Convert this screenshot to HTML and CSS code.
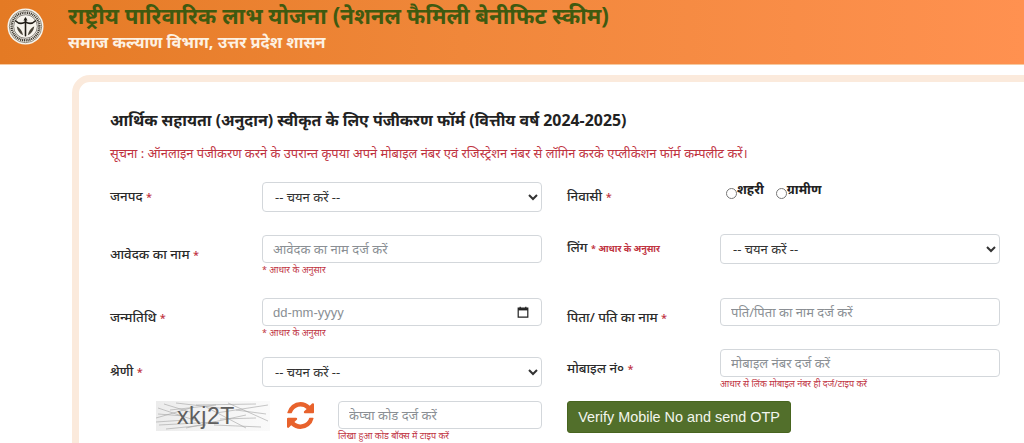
FILE: index.html
```html
<!DOCTYPE html>
<html lang="hi">
<head>
<meta charset="utf-8">
<title>राष्ट्रीय पारिवारिक लाभ योजना</title>
<link rel="stylesheet" href="styles.css">
</head>
<body>
<header class="site-header">
  <svg class="logo" viewBox="0 0 40 40" aria-hidden="true">
    <circle cx="20" cy="20" r="19.500" fill="#f7f4ec"/>
    <circle cx="20" cy="20" r="17.500" fill="none" stroke="#6b6455" stroke-width="0.8"/>
    <circle cx="20" cy="20" r="15" fill="none" stroke="#3a352b" stroke-width="2.600" stroke-dasharray="1.2 0.8"/>
    <circle cx="20" cy="20" r="12.800" fill="#f7f4ec" stroke="#2f2a22" stroke-width="0.6"/>
    <path d="M9.500 14C13 17.500 17 17 20 15C23 17 27 17.500 30.500 14M20 11V30" fill="none" stroke="#1f1b14" stroke-width="1.700" stroke-linecap="round"/>
    <path d="M17.800 13.500 20 10l2.200 3.500z" fill="#1f1b14"/>
    <path d="M10.500 20c1 5 3.500 8 7 9.500-1-4-3-8-7-9.500zM29.500 20c-1 5-3.500 8-7 9.500 1-4 3-8 7-9.500z" fill="#4b463a"/>
  </svg>
  <div class="brand">
    <h1 class="brand-title">राष्ट्रीय पारिवारिक लाभ योजना (नेशनल फैमिली बेनीफिट स्कीम)</h1>
    <p class="brand-sub">समाज कल्याण विभाग, उत्तर प्रदेश शासन</p>
  </div>
</header>

<main class="card">
  <h2 class="form-title">आर्थिक सहायता (अनुदान) स्वीकृत के लिए पंजीकरण फॉर्म (वित्तीय वर्ष 2024-2025)</h2>
  <p class="notice">सूचना : ऑनलाइन पंजीकरण करने के उपरान्त कृपया अपने मोबाइल नंबर एवं रजिस्ट्रेशन नंबर से लॉगिन करके एप्लीकेशन फॉर्म कम्पलीट करें।</p>

  <form class="form-columns">
    <div class="column">
      <div class="row row-district">
        <label class="label label-low">जनपद <span class="req">*</span></label>
        <select class="control select"><option>-- चयन करें --</option></select>
      </div>
      <div class="row row-name">
        <label class="label label-low2">आवेदक का नाम <span class="req">*</span></label>
        <div>
          <input class="control input" placeholder="आवेदक का नाम दर्ज करें">
          <small class="hint">* आधार के अनुसार</small>
        </div>
      </div>
      <div class="row row-dob">
        <label class="label label-low2">जन्मतिथि <span class="req">*</span></label>
        <div>
          <div class="date-wrap">
            <input class="control input date" placeholder="dd-mm-yyyy">
            <svg class="date-icon" viewBox="0 0 12 12" aria-hidden="true"><path d="M1.200 2.200h9.600v8.900H1.200z" fill="none" stroke="#222" stroke-width="1.200"/><path d="M3.200.8v1.800M8.800.8v1.800" stroke="#222" stroke-width="1.200"/><rect x="1.200" y="2.200" width="9.600" height="2.200" fill="#222"/></svg>
          </div>
          <small class="hint">* आधार के अनुसार</small>
        </div>
      </div>
      <div class="row row-cat">
        <label class="label">श्रेणी <span class="req">*</span></label>
        <select class="control select"><option>-- चयन करें --</option></select>
      </div>
      <div class="captcha-row">
        <svg class="captcha" viewBox="0 0 114 30" role="img" aria-label="captcha">
          <defs><linearGradient id="capfade" x1="0" x2="1" y1="0" y2="0"><stop offset="0" stop-color="#ececec"/><stop offset="0.5" stop-color="#f4f4f4"/><stop offset="1" stop-color="#fafafa"/></linearGradient></defs>
          <rect width="114" height="30" fill="url(#capfade)"/>
          <g stroke="#a2a2a2" stroke-width="0.6" fill="none">
            <path d="M2 7 44 21M8 3 34 11M0 17 38 6M3 24 60 21M40 4 100 3M60 12 112 4M72 2 112 20M58 24 105 26M30 27 90 14M50 6 90 27M2 13 28 15M80 9 110 13M20 2 72 8M10 28 50 24M0 21 30 19M64 18 100 17M14 9 60 4"/>
          </g>
          <text class="captcha-text" x="21" y="23">xkj2T</text>
        </svg>
        <svg class="refresh" viewBox="0 0 1536 1536" aria-hidden="true">
          <path fill="#e8622c" d="M1511 928q0 5-1 7-64 268-268 434.500t-478 166.500q-146 0-282.500-55t-243.500-157l-129 129q-19 19-45 19t-45-19-19-45v-448q0-26 19-45t45-19h448q26 0 45 19t19 45-19 45l-137 137q71 66 161 102t187 36q134 0 250-65t186-179q11-17 53-117 8-23 30-23h192q13 0 22.500 9.500t9.500 22.500zm25-800v448q0 26-19 45t-45 19h-448q-26 0-45-19t-19-45 19-45l138-138q-148-137-349-137-134 0-250 65t-186 179q-11 17-53 117-8 23-30 23h-199q-13 0-22.500-9.500t-9.500-22.500v-7q65-268 270-434.500t480-166.500q146 0 284 55.500t245 156.500l130-129q19-19 45-19t45 19 19 45z"/>
        </svg>
        <div class="captcha-field">
          <input class="control input" placeholder="केप्चा कोड दर्ज करें">
          <small class="hint">लिखा हुआ कोड बॉक्स में टाइप करें</small>
        </div>
      </div>
    </div>

    <div class="column">
      <div class="row row-res">
        <label class="label label-low">निवासी <span class="req">*</span></label>
        <div class="radios">
          <label class="radio"><input type="radio" name="res"><span>शहरी</span></label>
          <label class="radio"><input type="radio" name="res"><span>ग्रामीण</span></label>
        </div>
      </div>
      <div class="row row-gender">
        <label class="label label-top">लिंग <small class="req-inline">* आधार के अनुसार</small></label>
        <select class="control select"><option>-- चयन करें --</option></select>
      </div>
      <div class="row row-father">
        <label class="label label-low2">पिता/ पति का नाम <span class="req">*</span></label>
        <input class="control input" placeholder="पति/पिता का नाम दर्ज करें">
      </div>
      <div class="row row-mobile">
        <label class="label label-low2">मोबाइल नं० <span class="req">*</span></label>
        <div>
          <input class="control input" placeholder="मोबाइल नंबर दर्ज करें">
          <small class="hint">आधार से लिंक मोबाइल नंबर ही दर्ज/टाइप करें</small>
        </div>
      </div>
      <button type="button" class="btn-verify">Verify Mobile No and send OTP</button>
    </div>
  </form>
</main>
</body>
</html>
```
FILE: styles.css
```css
* { box-sizing: border-box; }
html, body { margin: 0; height: 443px; overflow: hidden; background: #fff; }
body { font-family: "Noto Sans", "Liberation Sans", sans-serif; color: #222; }

.site-header {
  height: 65px;
  display: flex;
  align-items: flex-start;
  padding: 8px 0 0 7px;
  background: linear-gradient(90deg, #e47a24 0%, #f0873a 45%, #ff9150 100%);
  border-bottom: 1px solid #f6c9a0;
}
.logo { width: 37px; height: 37px; flex: none; margin-right: 24px; }
.brand { margin-top: -7px; }
.brand-title { margin: 0; font-size: 22.3px; line-height: 30px; font-weight: 700; color: #3f5a10; white-space: nowrap; }
.brand-sub { margin: 0; font-size: 16.3px; line-height: 22px; font-weight: 700; color: #fdf1e2; white-space: nowrap; }

.card {
  width: 1100px;
  height: 460px;
  margin: 10px 0 0 72px;
  padding: 26px 0 0 31px;
  background: #fff;
  border: 7px solid #fbeadc;
  border-radius: 18px;
}
.form-title { margin: 0; font-size: 15.9px; line-height: 24px; font-weight: 700; color: #222; white-space: nowrap; }
.notice { margin: 12px 0 0; font-size: 12.9px; line-height: 18px; color: #c0333f; white-space: nowrap; }

.form-columns { display: flex; gap: 25px; margin-top: 20px; }
.column { width: 432px; }
.column + .column { width: 433px; }
.row { display: grid; grid-template-columns: 152px 280px; align-items: start; }
.column + .column .row { grid-template-columns: 153px 280px; }

.label { display: block; font-size: 13.3px; line-height: 20px; font-weight: 500; color: #2a2a2a; padding-top: 4px; }
.label-low { padding-top: 4px; }
.label-low2 { padding-top: 9px; }
.label-top { padding-top: 3px; }
.req { color: #c0333f; font-size: 11px; }
.req-inline { font-size: 9px; font-weight: 700; color: #c0333f; }

.control {
  display: block;
  width: 100%;
  border: 1px solid #d3d7db;
  border-radius: 4px;
  background: #fff;
  font-family: inherit;
  font-size: 13px;
  color: #333;
}
.select { height: 30px; padding: 0 8px; }
.input { height: 28px; padding: 0 10px; }
.input::placeholder { color: #8a8f94; opacity: 1; }
.date { font-family: "Liberation Sans", sans-serif; }
.hint { display: block; font-size: 9px; line-height: 12px; color: #c0333f; margin-top: 1px; white-space: nowrap; }

.date-wrap { position: relative; }
.date-icon { position: absolute; right: 13px; top: 8px; width: 12px; height: 12px; }

.row-district { height: 53px; }
.row-name { height: 63px; }
.row-dob { height: 59px; }
.row-cat { height: 44px; }
.row-res { height: 52px; }
.row-gender { height: 64px; }
.row-father { height: 51px; }
.row-mobile { height: 52px; }

.captcha-row { display: flex; align-items: flex-start; }
.captcha { width: 114px; height: 30px; margin: 0 17px 0 46px; flex: none; }
.captcha-text { font-family: "Liberation Sans", sans-serif; font-size: 23px; letter-spacing: 0.6px; fill: #5f5f5f; }
.refresh { width: 27px; height: 27px; flex: none; margin: 1px 24px 0 0; }
.captcha-field { width: 204px; }

.radios { display: flex; gap: 12px; padding: 0 0 0 6px; margin-top: -2px; }
.radio { display: flex; align-items: flex-start; font-size: 13px; line-height: 18px; font-weight: 700; color: #222; }
.radio input { width: 11px; height: 11px; margin: 8px 0 0; }

.btn-verify {
  display: block;
  width: 224px;
  height: 32px;
  padding: 0;
  border: 1px solid #48651f;
  border-radius: 3px;
  background: #526f2b;
  color: #f3f6ee;
  font-family: "Liberation Sans", sans-serif;
  font-size: 14.4px;
}
```
